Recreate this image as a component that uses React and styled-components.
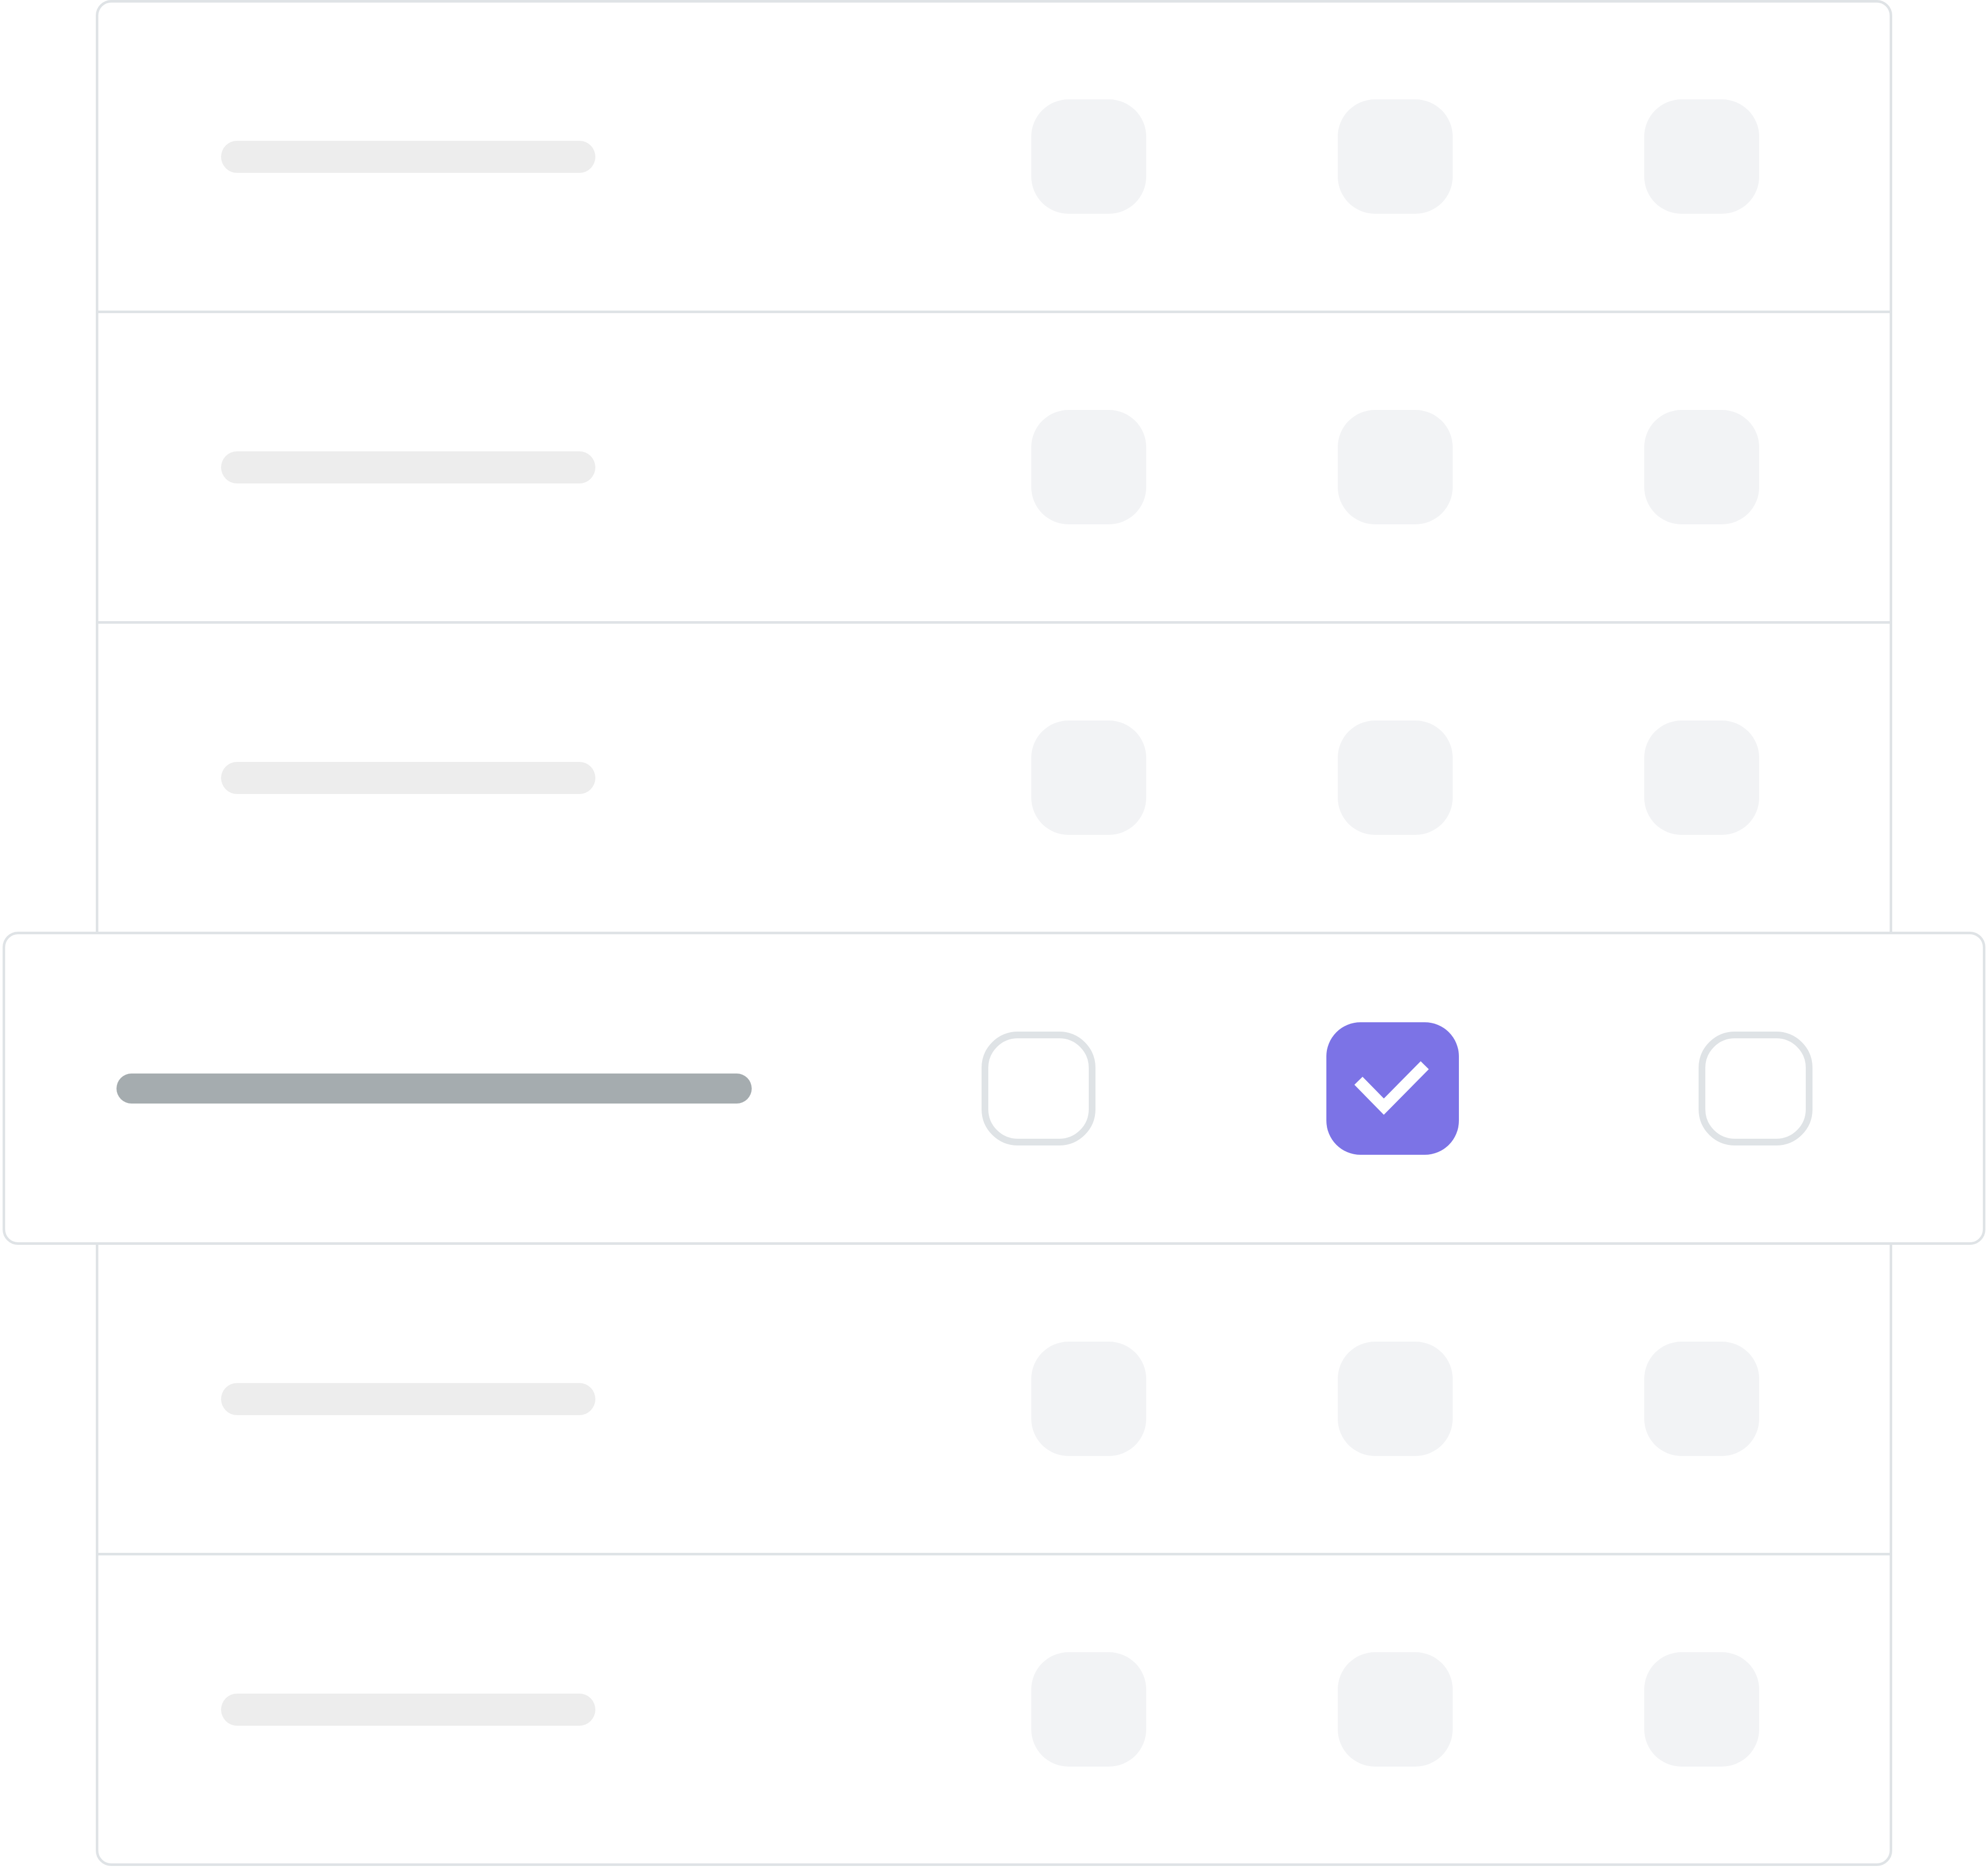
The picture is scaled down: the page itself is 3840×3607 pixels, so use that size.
import React from "react";
import styled, { createGlobalStyle } from "styled-components";

const GlobalStyle = createGlobalStyle`
  html, body {
    margin: 0;
    padding: 0;
    background: #ffffff;
    font-family: "Liberation Sans", Arial, sans-serif;
  }
`;

const Page = styled.div`
  width: 3840px;
  display: flex;
  justify-content: center;
`;

const Table = styled.div`
  width: 3470px;
  box-sizing: border-box;
  display: flex;
  flex-direction: column;
  background: #ffffff;
  border: 5px solid #dfe3e6;
  border-radius: 30px;
`;

const Row = styled.div`
  height: 595px;
  display: flex;
  align-items: center;
  padding: 0 252px 0 237px;
  border-top: ${props => (props.$divided ? "5px solid #dfe3e6" : "none")};
`;

const ActiveRow = styled.div`
  height: 605px;
  box-sizing: border-box;
  margin: 0 -185px;
  display: flex;
  align-items: center;
  padding: 0 329px 0 215px;
  background: #ffffff;
  border: 5px solid #dfe3e6;
  border-radius: 30px;
  position: relative;
`;

const Bar = styled.div`
  width: ${props => (props.$active ? "1227px" : "723px")};
  height: ${props => (props.$active ? "58px" : "62px")};
  border-radius: 31px;
  background: ${props => (props.$active ? "#a5acaf" : "#ededed")};
`;

const Cells = styled.div`
  margin-left: auto;
  display: flex;
  align-items: center;
  gap: ${props => props.$gap}px;
`;

const Placeholder = styled.div`
  width: 222px;
  height: 221px;
  border-radius: 72px;
  background: #f2f3f5;
`;

const Checkbox = styled.div`
  width: 220px;
  height: 220px;
  box-sizing: border-box;
  border-radius: 70px;
  border: 13px solid #dfe3e6;
  background: #ffffff;
`;

const Checked = styled.div`
  width: 256px;
  height: 256px;
  margin-right: 17px;
  border-radius: 66px;
  background: #7c73e6;
  display: flex;

  svg {
    width: 100%;
    height: 100%;
  }
`;

const PlainRow = ({ divided }) => (
  <Row $divided={divided}>
    <Bar />
    <Cells $gap={370}>
      <Placeholder />
      <Placeholder />
      <Placeholder />
    </Cells>
  </Row>
);

const SelectedRow = () => (
  <ActiveRow>
    <Bar $active />
    <Cells $gap={446}>
      <Checkbox />
      <Checked>
        <svg viewBox="0 0 256 256">
          <polyline
            points="62,113 111,163 190,83"
            fill="none"
            stroke="#ffffff"
            strokeWidth="22"
            strokeLinecap="butt"
            strokeLinejoin="miter"
          />
        </svg>
      </Checked>
      <Checkbox />
    </Cells>
  </ActiveRow>
);

export default function App() {
  return (
    <Page>
      <GlobalStyle />
      <Table>
        <PlainRow />
        <PlainRow divided />
        <PlainRow divided />
        <SelectedRow />
        <PlainRow />
        <PlainRow divided />
      </Table>
    </Page>
  );
}
